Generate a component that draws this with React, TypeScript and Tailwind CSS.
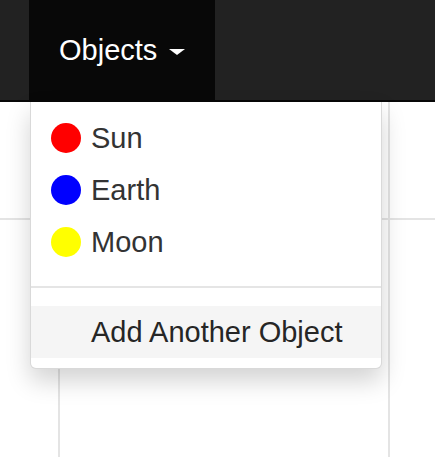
export default function App() {
  const objects = [
    { name: "Sun", color: "bg-[#ff0000]" },
    { name: "Earth", color: "bg-[#0000ff]" },
    { name: "Moon", color: "bg-[#ffff00]" },
  ];

  return (
    <div className="w-[435px] h-[457px] overflow-hidden bg-white font-['Liberation_Sans',Arial,sans-serif]">
      {/* Navbar */}
      <nav className="h-[102px] bg-[#222222] border-b-2 border-[#080808] pl-[29px] flex">
        <div className="h-[100px] bg-[#080808] px-[30px] flex items-center text-white text-[29px] leading-[40px]">
          <span>Objects</span>
          <span className="ml-[12px] mt-[4px] w-0 h-0 border-t-[6px] border-t-white border-x-[8px] border-x-transparent" />
        </div>
      </nav>

      {/* Page behind the menu */}
      <div className="relative">
        <div className="grid grid-cols-[60px_330px_1fr] grid-rows-[118px_240px] h-[355px]">
          <div className="border-r-2 border-b-2 border-[#e4e4e4]" />
          <div className="border-r-2 border-b-2 border-[#e4e4e4]" />
          <div className="border-b-2 border-[#e4e4e4]" />
          <div className="border-r-2 border-[#e4e4e4]" />
          <div className="border-r-2 border-[#e4e4e4]" />
          <div />
        </div>

        {/* Dropdown */}
        <div className="absolute left-[30px] top-0 w-[352px] bg-white border border-t-0 border-[rgba(0,0,0,0.15)] rounded-b-[6px] shadow-[0_12px_24px_rgba(0,0,0,0.175)] py-[10px] text-[29px] leading-[40px] text-[#333333]">
          {objects.map((o) => (
            <div key={o.name} className="h-[52px] px-[20px] flex items-center gap-[10px]">
              <span className={`w-[30px] h-[30px] rounded-full ${o.color}`} />
              <span>{o.name}</span>
            </div>
          ))}
          <div className="h-[2px] bg-[#e5e5e5] my-[18px]" />
          <div className="h-[52px] pl-[60px] flex items-center bg-[#f5f5f5] text-[#262626]">
            Add Another Object
          </div>
        </div>
      </div>
    </div>
  );
}
